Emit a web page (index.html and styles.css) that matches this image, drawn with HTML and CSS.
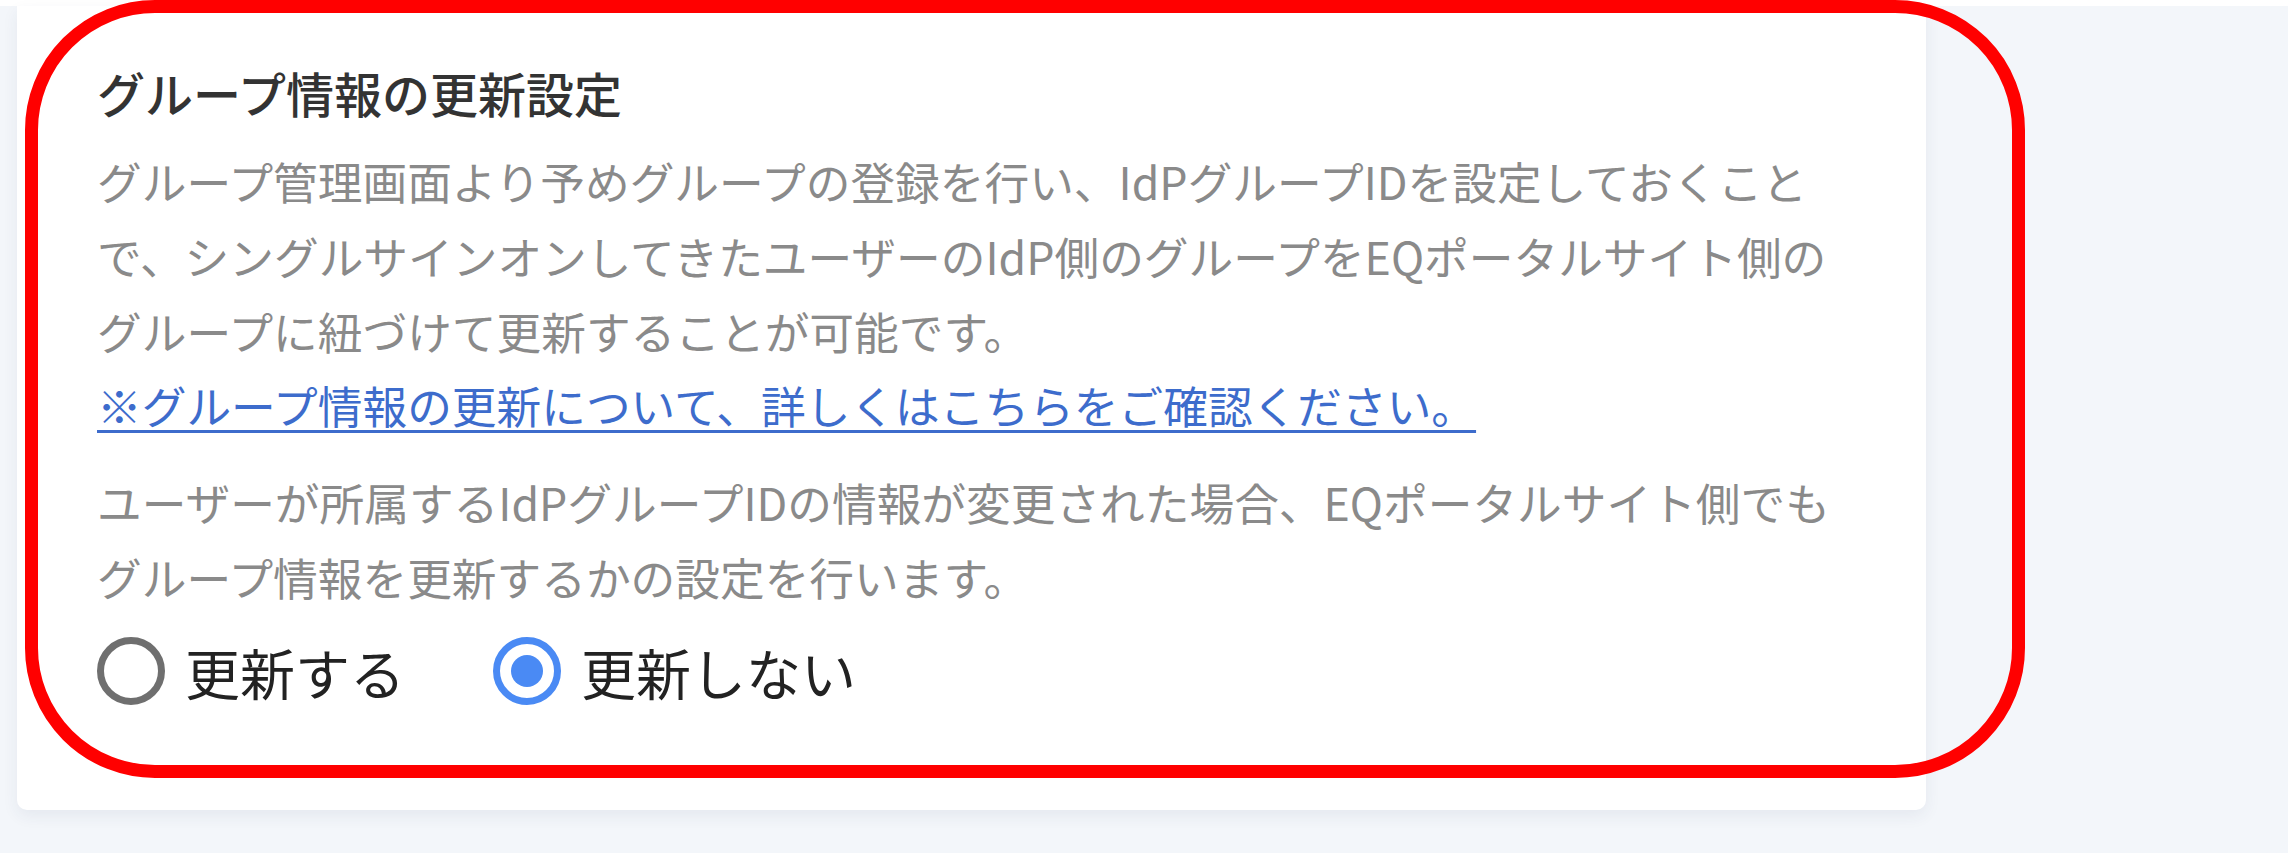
FILE: index.html
```html
<!DOCTYPE html>
<html lang="ja">
<head>
<meta charset="utf-8">
<title>グループ情報の更新設定</title>
<link rel="stylesheet" href="styles.css">
</head>
<body>
<div class="page">
  <div class="topbar"></div>
  <section class="card">
    <h2 class="card-title">グループ情報の更新設定</h2>
    <p class="desc">グループ管理画面より予めグループの登録を行い、IdPグループIDを設定しておくこと<br>で、シングルサインオンしてきたユーザーのIdP側のグループをEQポータルサイト側の<br>グループに紐づけて更新することが可能です。<br><a class="link" href="#">※グループ情報の更新について、詳しくはこちらをご確認ください。</a></p>
    <p class="desc desc-second">ユーザーが所属するIdPグループIDの情報が変更された場合、EQポータルサイト側でも<br>グループ情報を更新するかの設定を行います。</p>
    <div class="radio-group">
      <label class="radio">
        <span class="radio-mark"></span>
        <span class="radio-label">更新する</span>
      </label>
      <label class="radio radio-checked">
        <span class="radio-mark"></span>
        <span class="radio-label">更新しない</span>
      </label>
    </div>
  </section>
  <div class="annotation"></div>
</div>
</body>
</html>
```
FILE: styles.css
```css
html, body {
  margin: 0;
  padding: 0;
}
body {
  background: #f3f6fa;
  font-family: "Noto Sans CJK JP", "Noto Sans", sans-serif;
  width: 2288px;
  height: 853px;
  overflow: hidden;
}
.page {
  position: relative;
  height: 853px;
}
.topbar {
  height: 6px;
  background: #ffffff;
}
.card {
  margin-left: 17px;
  width: 1909px;
  height: 804px;
  box-sizing: border-box;
  padding: 50px 80px 0 80px;
  background: #ffffff;
  border-radius: 0 0 10px 10px;
  box-shadow: 0 6px 16px rgba(40, 60, 100, 0.07);
}
.card-title {
  margin: 0;
  font-size: 48px;
  line-height: 72px;
  font-weight: 500;
  color: #333333;
}
.desc {
  margin: 16px 0 0 0;
  font-size: 44.7px;
  line-height: 74.8px;
  color: #8a8a8a;
  white-space: nowrap;
}
.desc-second {
  margin-top: 22px;
}
.link {
  color: #3d6ccc;
  text-decoration: underline;
  text-decoration-thickness: 3px;
  text-underline-offset: 6px;
}
.radio-group {
  display: flex;
  align-items: center;
  gap: 88px;
  margin-top: 22px;
}
.radio {
  display: flex;
  align-items: center;
  gap: 20px;
}
.radio-mark {
  width: 68px;
  height: 68px;
  box-sizing: border-box;
  border: 7px solid #6f6f6f;
  border-radius: 50%;
  display: flex;
  align-items: center;
  justify-content: center;
}
.radio-checked .radio-mark {
  border-color: #4a8af4;
}
.radio-checked .radio-mark::after {
  content: "";
  width: 32px;
  height: 32px;
  border-radius: 50%;
  background: #4a8af4;
}
.radio-label {
  font-size: 55px;
  line-height: 68px;
  color: #222222;
}
.annotation {
  position: absolute;
  left: 25px;
  top: 0;
  width: 2000px;
  height: 778px;
  box-sizing: border-box;
  border: 13px solid #ff0000;
  border-radius: 130px;
  pointer-events: none;
}
```
